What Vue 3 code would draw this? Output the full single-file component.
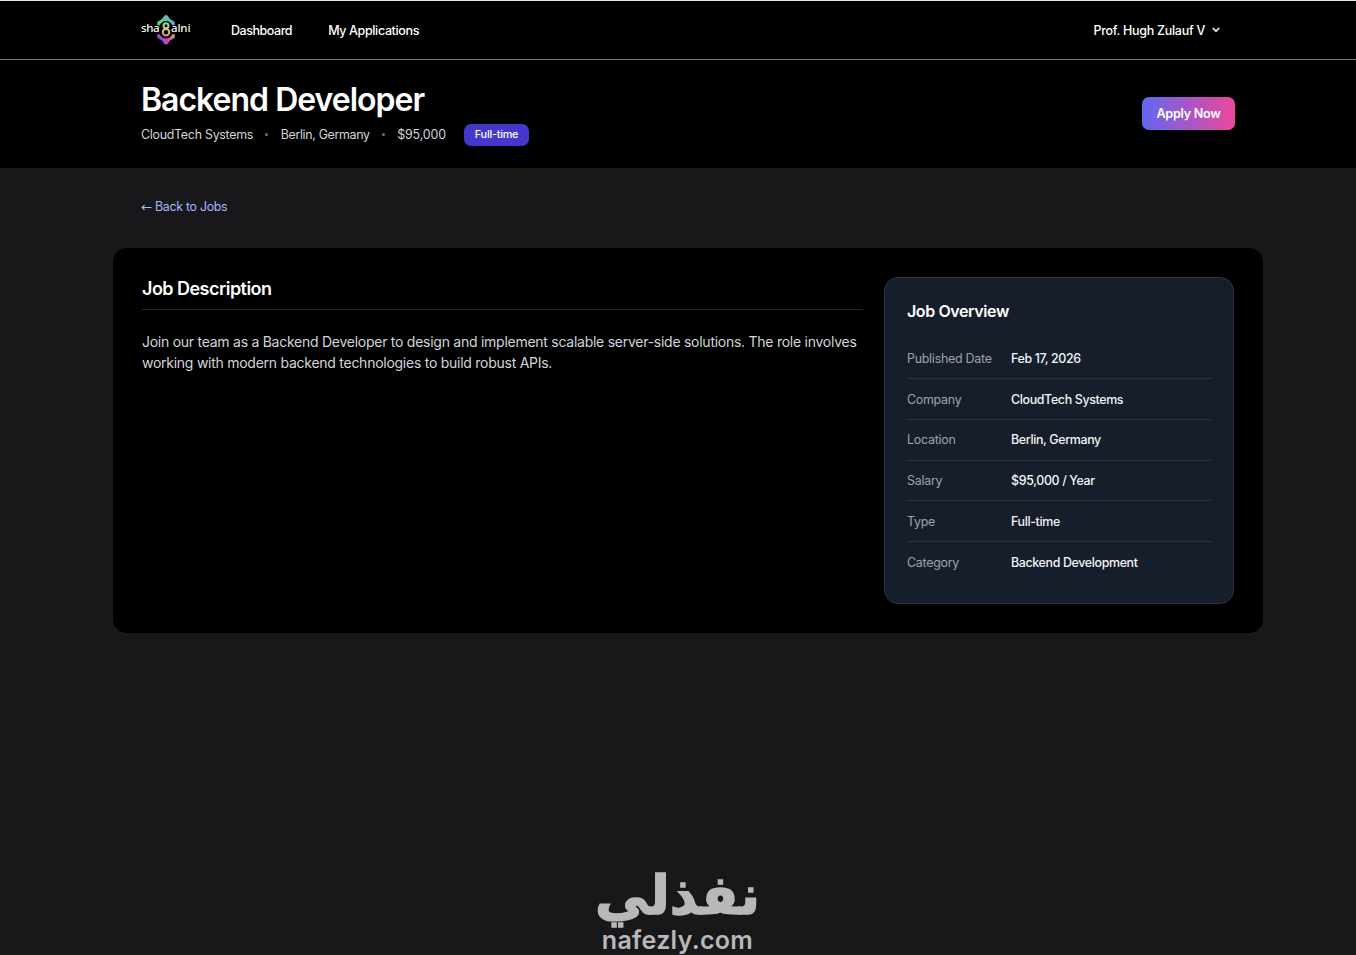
<script setup>
import { ref } from 'vue'

const user = ref('Prof. Hugh Zulauf V')

const job = ref({
  title: 'Backend Developer',
  company: 'CloudTech Systems',
  location: 'Berlin, Germany',
  salary: '$95,000',
  type: 'Full-time',
  description:
    'Join our team as a Backend Developer to design and implement scalable server-side solutions. The role involves working with modern backend technologies to build robust APIs.'
})

const overview = [
  { label: 'Published Date', value: 'Feb 17, 2026' },
  { label: 'Company', value: job.value.company },
  { label: 'Location', value: job.value.location },
  { label: 'Salary', value: job.value.salary + ' / Year' },
  { label: 'Type', value: job.value.type },
  { label: 'Category', value: 'Backend Development' }
]
</script>

<template>
  <div class="page">
    <nav class="navbar">
      <div class="container nav-inner">
        <a href="#" class="logo">
          <svg width="52" height="32" viewBox="0 0 52 32">
            <defs>
              <linearGradient id="logo-top" x1="0" y1="0.6" x2="1" y2="0.4">
                <stop offset="0" stop-color="#5fd07c" />
                <stop offset="0.5" stop-color="#5cc0a8" />
                <stop offset="1" stop-color="#5f9bd8" />
              </linearGradient>
              <linearGradient id="logo-bottom" x1="0" y1="0.6" x2="1" y2="0.4">
                <stop offset="0" stop-color="#8a4ee0" />
                <stop offset="0.5" stop-color="#bd40d8" />
                <stop offset="1" stop-color="#ee8a6c" />
              </linearGradient>
              <linearGradient id="logo-eight" x1="0" y1="8" x2="0" y2="23" gradientUnits="userSpaceOnUse">
                <stop offset="0" stop-color="#7fd6a0" />
                <stop offset="0.5" stop-color="#d9c882" />
                <stop offset="1" stop-color="#f08a5c" />
              </linearGradient>
            </defs>
            <path
              d="M16.2 11V8L21.6 4.6Q23 1 25 1T28.4 4.6L33.8 8V11L31.6 11.6Q28.9 7 25 7T18.4 11.6Z"
              fill="url(#logo-top)"
            />
            <path
              d="M16.2 20.6V23.6L21.6 27Q23 30.6 25 30.6T28.4 27L33.8 23.6V20.6L31.6 20Q28.9 24.6 25 24.6T18.4 20Z"
              fill="url(#logo-bottom)"
            />
            <g fill="none" stroke="url(#logo-eight)" stroke-width="2">
              <circle cx="25" cy="11.8" r="2.5" />
              <circle cx="25" cy="18.2" r="3.2" />
            </g>
            <text x="0" y="18.4" textLength="18.5" class="logo-text">sha</text>
            <text x="30" y="18.4" textLength="19.5" class="logo-text">alni</text>
          </svg>
        </a>
        <a href="#" class="nav-link">Dashboard</a>
        <a href="#" class="nav-link apps">My Applications</a>
        <button class="user-menu">
          <span>{{ user }}</span>
          <svg width="8" height="6" viewBox="0 0 8 6">
            <path d="M0.8 1L4 4.2L7.2 1" fill="none" stroke="#e5e7eb" stroke-width="1.7" />
          </svg>
        </button>
      </div>
    </nav>

    <header class="hero">
      <div class="container hero-inner">
        <div>
          <h1 class="title">{{ job.title }}</h1>
          <div class="meta">
            <span class="meta-company">{{ job.company }}</span>
            <i class="dot"></i>
            <span class="meta-location">{{ job.location }}</span>
            <i class="dot"></i>
            <span class="meta-salary">{{ job.salary }}</span>
            <span class="badge">{{ job.type }}</span>
          </div>
        </div>
        <button class="apply-btn">Apply Now</button>
      </div>
    </header>

    <main class="content">
      <a href="#" class="back-link">
        <svg width="11" height="8" viewBox="0 0 11 8">
          <path d="M10.5 4.5H1M3.6 2.2L1 4.5L3.6 6.8" fill="none" stroke="#a5b4fc" stroke-width="1.1" />
        </svg>
        <span>Back to Jobs</span>
      </a>

      <div class="card">
        <section class="description">
          <h2>Job Description</h2>
          <p>{{ job.description }}</p>
        </section>

        <aside class="overview">
          <h3>Job Overview</h3>
          <div v-for="item in overview" :key="item.label" class="row">
            <span class="label">{{ item.label }}</span>
            <span class="value">{{ item.value }}</span>
          </div>
        </aside>
      </div>
    </main>

    <div class="watermark">
      <span class="watermark-ar" lang="ar" dir="rtl">نفذلي</span>
      <span class="watermark-en">nafezly.com</span>
    </div>
  </div>
</template>

<style>
body {
  margin: 0;
  background: #18181b;
}
</style>

<style scoped>
.page {
  position: relative;
  box-sizing: border-box;
  height: 955px;
  overflow: hidden;
  border-top: 1px solid #dfe7e5;
  background: #18181b;
  color: #fff;
  font-family: Inter, 'Liberation Sans', sans-serif;
}

a {
  text-decoration: none;
}

button {
  border: 0;
  padding: 0;
  font-family: inherit;
  color: #fff;
}

h1,
h2,
h3,
p {
  margin: 0;
}

.container {
  box-sizing: border-box;
  width: 1094px;
  margin-left: 141px;
}

.navbar {
  height: 58px;
  background: #000;
  border-bottom: 1px solid #777;
}

.nav-inner {
  display: flex;
  align-items: center;
  height: 58px;
}

.logo {
  display: flex;
  width: 90px;
  margin-top: -1px;
}

.logo-text {
  font-family: 'Noto Sans', sans-serif;
  font-size: 11.5px;
  font-weight: 500;
  fill: #f4f4f4;
}

.nav-link {
  padding-top: 2px;
  color: #fff;
  font-size: 12.5px;
  font-weight: 500;
  line-height: 20px;
  letter-spacing: -0.45px;
}

.apps {
  margin-left: 36px;
  letter-spacing: -0.36px;
}

.user-menu {
  display: flex;
  align-items: center;
  gap: 7px;
  margin-left: auto;
  margin-right: 15px;
  background: none;
  font-size: 12.5px;
  font-weight: 500;
  letter-spacing: -0.28px;
}

.hero {
  height: 108px;
  background: #000;
}

.hero-inner {
  display: flex;
  justify-content: space-between;
  align-items: center;
  height: 106px;
}

.title {
  margin-top: -1px;
  font-size: 32px;
  font-weight: 600;
  line-height: 40px;
  letter-spacing: -1px;
}

.meta {
  display: flex;
  align-items: center;
  height: 22px;
  margin-top: 4px;
  color: #d1d5db;
  font-size: 12.4px;
  letter-spacing: -0.26px;
}

.meta-location {
  letter-spacing: -0.33px;
}

.meta-salary {
  letter-spacing: -0.1px;
}

.dot {
  width: 3px;
  height: 3px;
  margin: 0 12.3px;
  border-radius: 50%;
  background: #6b7280;
}

.badge {
  width: 65px;
  margin-left: 18px;
  border-radius: 7px;
  background: #4338ca;
  color: #fff;
  font-size: 10.8px;
  font-weight: 500;
  line-height: 22px;
  letter-spacing: -0.2px;
  text-align: center;
}

.apply-btn {
  width: 93px;
  height: 33px;
  border-radius: 7px;
  background: linear-gradient(to right, #6366f1, #ec4899);
  font-size: 12.6px;
  font-weight: 600;
  letter-spacing: -0.25px;
}

.content {
  padding: 28px 0 0 113px;
}

.back-link {
  display: flex;
  align-items: center;
  gap: 3px;
  height: 21px;
  margin-left: 28px;
  color: #a5b4fc;
  font-size: 12.4px;
  letter-spacing: -0.3px;
}

.card {
  display: flex;
  justify-content: space-between;
  align-items: flex-start;
  box-sizing: border-box;
  width: 1150px;
  height: 385px;
  margin-top: 31px;
  padding: 29px;
  border-radius: 14px;
  background: #000;
}

.description {
  width: 721px;
}

.description h2 {
  padding-bottom: 8px;
  border-bottom: 1px solid #27272a;
  font-size: 18px;
  font-weight: 600;
  line-height: 24px;
  letter-spacing: -0.53px;
}

.description p {
  margin-top: 21px;
  color: #d1d5db;
  font-size: 14px;
  line-height: 21px;
  letter-spacing: -0.26px;
}

.overview {
  box-sizing: border-box;
  width: 350px;
  height: 327px;
  padding: 21px 21px 22px 22px;
  border: 1px solid #2b3443;
  border-radius: 14px;
  background: #171e2b;
}

.overview h3 {
  margin-bottom: 15.5px;
  font-size: 16px;
  font-weight: 600;
  line-height: 24px;
  letter-spacing: -0.4px;
}

.row {
  display: flex;
  align-items: center;
  box-sizing: border-box;
  height: 40.7px;
  border-bottom: 1px solid #2a3240;
  font-size: 12.4px;
}

.row:last-child {
  border-bottom: 0;
}

.label {
  width: 104px;
  color: #9ca3af;
  letter-spacing: -0.24px;
}

.value {
  color: #f3f4f6;
  font-weight: 500;
  letter-spacing: -0.34px;
}

/* lies over the bottom of the page */
.watermark {
  position: absolute;
  left: 596px;
  bottom: 0;
  display: flex;
  flex-direction: column;
  align-items: center;
  width: 163px;
  color: #b8b8b9;
  white-space: nowrap;
}

.watermark-ar {
  font-family: 'DejaVu Sans', sans-serif;
  font-size: 54px;
  font-weight: 700;
  line-height: 58px;
  -webkit-text-stroke: 1.5px #b8b8b9;
}

.watermark-en {
  font-size: 25px;
  font-weight: 600;
  line-height: 30px;
  letter-spacing: 0.3px;
}
</style>
